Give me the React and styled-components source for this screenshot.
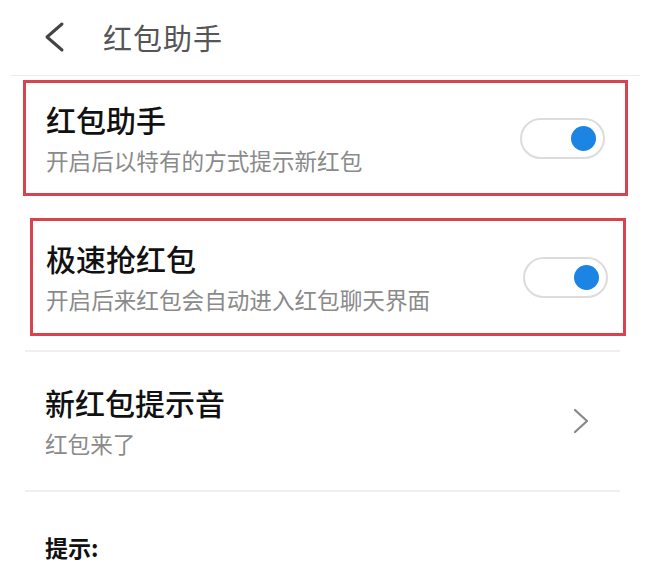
import React from 'react';
import styled, { createGlobalStyle } from 'styled-components';

const GlobalStyle = createGlobalStyle`
  html, body {
    margin: 0;
    padding: 0;
    background: #fff;
  }
  body {
    font-family: "Noto Sans CJK SC", "Noto Sans", sans-serif;
  }
`;

const Page = styled.div`
  width: 650px;
  height: 575px;
  background: #fff;
  overflow: hidden;
`;

const Header = styled.div`
  height: 76px;
  display: flex;
  align-items: center;
  padding: 0 0 2px 33px;
  gap: 38px;
  margin: 0 10px;
  border-bottom: 1px solid #ececec;
  box-sizing: border-box;
`;

const HeaderTitle = styled.div`
  font-size: 29px;
  color: #555;
  letter-spacing: 1px;
`;

const List = styled.div`
  padding: 4px 22px 0 23px;
`;

const Item = styled.div`
  display: flex;
  align-items: center;
  justify-content: space-between;
  box-sizing: border-box;
  height: ${({ $h }) => $h}px;
  margin: 0 ${({ $mr }) => $mr || 0}px ${({ $mb }) => $mb || 0}px ${({ $ml }) => $ml || 0}px;
  padding: 0 ${({ $pr }) => $pr || 20}px 0 ${({ $pl }) => $pl || 20}px;
  border: 3px solid ${({ $marked }) => ($marked ? '#d9434e' : 'transparent')};
`;

const PlainItem = styled.div`
  display: flex;
  align-items: center;
  justify-content: space-between;
  box-sizing: border-box;
  height: 142px;
  margin: 0 8px 0 2px;
  padding: 0 30px 0 20px;
  border-top: 2px solid #efefef;
  border-bottom: 2px solid #efefef;
`;

const Texts = styled.div`
  display: flex;
  flex-direction: column;
  gap: ${({ $gap }) => $gap}px;
`;

const Title = styled.div`
  font-size: 30px;
  font-weight: 500;
  color: #111;
  line-height: 1.2;
`;

const Sub = styled.div`
  font-size: 22.6px;
  color: #8a8a8a;
  line-height: 1.2;
`;

const Track = styled.div`
  width: 85px;
  height: 41px;
  box-sizing: border-box;
  border: 2px solid #dcdcdc;
  border-radius: 21px;
  display: flex;
  align-items: center;
  justify-content: flex-end;
  padding-right: 7px;
`;

const Knob = styled.div`
  width: 25px;
  height: 25px;
  border-radius: 50%;
  background: #1c84e3;
`;

const Hint = styled.div`
  padding: 38px 0 0 45px;
  font-size: 23px;
  font-weight: 700;
  color: #111;
`;

const Toggle = () => (
  <Track>
    <Knob />
  </Track>
);

const BackIcon = () => (
  <svg width="22" height="32" viewBox="0 0 22 32" fill="none">
    <path d="M19 3 L4 16 L19 29" stroke="#444" strokeWidth="3" strokeLinecap="round" strokeLinejoin="round" />
  </svg>
);

const ArrowIcon = () => (
  <svg width="17" height="26" viewBox="0 0 17 26" fill="none">
    <path d="M2 2 L14 13 L2 24" stroke="#888" strokeWidth="2.2" strokeLinecap="round" strokeLinejoin="round" />
  </svg>
);

export default function App() {
  return (
    <Page>
      <GlobalStyle />
      <Header>
        <BackIcon />
        <HeaderTitle>红包助手</HeaderTitle>
      </Header>
      <List>
        <Item $marked $h={116} $mb={22}>
          <Texts $gap={10}>
            <Title>红包助手</Title>
            <Sub>开启后以特有的方式提示新红包</Sub>
          </Texts>
          <Toggle />
        </Item>
        <Item $marked $h={118} $mb={14} $ml={7} $mr={2} $pl={13} $pr={15}>
          <Texts $gap={10}>
            <Title>极速抢红包</Title>
            <Sub>开启后来红包会自动进入红包聊天界面</Sub>
          </Texts>
          <Toggle />
        </Item>
        <PlainItem>
          <Texts $gap={10}>
            <Title>新红包提示音</Title>
            <Sub>红包来了</Sub>
          </Texts>
          <ArrowIcon />
        </PlainItem>
      </List>
      <Hint>提示:</Hint>
    </Page>
  );
}
